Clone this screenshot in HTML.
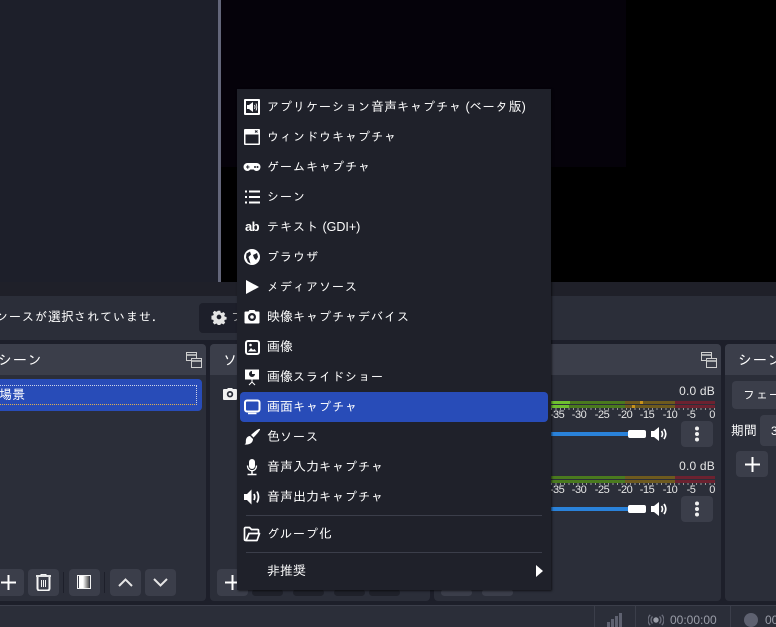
<!DOCTYPE html>
<html lang="ja"><head><meta charset="utf-8"><style>
html,body{margin:0;padding:0;width:776px;height:627px;overflow:hidden;background:#1d1f2a}
body{position:relative;font:12px "Liberation Sans","IPAGothic","Noto Sans CJK JP",sans-serif;color:#fff}
.a{position:absolute}
.t{position:absolute;white-space:nowrap;line-height:16px;height:16px}
.p{position:absolute;background:#2b2e39;border-radius:4px;top:344px;height:257px;overflow:hidden}
.h{position:absolute;left:0;right:0;top:0;height:31px;background:#3b3e4a}
.b{position:absolute;background:#3b3e4a;border-radius:4px}
.m{position:absolute;left:237px;top:89px;width:314px;height:501px;background:#1f212a;box-shadow:1px 1px 2px rgba(0,0,0,.6)}
.i{position:absolute;left:30px;font-size:12px;letter-spacing:1px;white-space:nowrap;line-height:16px}
.k{font-size:13px;letter-spacing:0}
.l{font-size:12.5px;letter-spacing:0}
.m svg{position:absolute;left:6px;width:18px;height:18px}
.tl{position:absolute;font-size:11px;color:#e6e6e6;line-height:10px;transform:translateX(-50%);letter-spacing:-.5px}
</style></head><body>
<div class="a" style="left:218px;top:0;width:3px;height:282px;background:#63667a"></div>
<div class="a" style="left:221px;top:0;width:555px;height:282px;background:#000"></div>
<div class="a" style="left:221px;top:0;width:405px;height:167px;background:#05020a"></div>
<div class="a" style="left:0;top:282px;width:776px;height:14px;background:#1f2029"></div>
<div class="a" style="left:0;top:296px;width:776px;height:44px;background:#2b2e39"></div>
<div class="t" style="left:-4px;top:309px;letter-spacing:1px">ンースが<span class="k">選択</span>されていませ．</div>
<div class="a" style="left:199px;top:303px;width:60px;height:30px;background:#1d1f2a;border-radius:4px"></div>
<svg class="a" style="left:211px;top:309px" width="16" height="16" viewBox="0 0 16 16"><path fill="#e4e4e4" fill-rule="evenodd" d="M6.600 1h2.800l.4 2 1.300.6 1.800-1.100 2 2-1.100 1.800.6 1.300 2 .4v2.800l-2 .4-.6 1.300 1.100 1.800-2 2-1.800-1.100-1.300.6-.4 2H6.600l-.4-2-1.300-.6-1.800 1.100-2-2 1.100-1.800-.6-1.300-2-.4V6.600l2-.4.6-1.300-1.100-1.800 2-2 1.800 1.100 1.300-.6zM8 5.400a2.600 2.600 0 1 0 0 5.200 2.600 2.600 0 0 0 0-5.200z" transform="translate(.8 .8) scale(.9)"/></svg>
<div class="t" style="left:231px;top:309px;color:#aaa">フ</div>

<div class="p" style="left:-6px;width:212px">
 <div class="h"></div>
 <div class="a" style="left:0;top:35px;width:208px;height:32px;background:#284cb8;border-radius:4px"></div>
 <div class="a" style="left:0;top:41px;width:201px;height:18px;border:1px dotted #e0b050;border-top-color:#cfd4e8;border-right-color:#cfd4e8"></div>
</div>
<div class="t" style="left:-2px;top:352px;font-size:14px;letter-spacing:.8px">シーン</div>
<div class="t" style="left:-1px;top:387px;font-size:13px">場景</div>
<svg class="a" style="left:186px;top:352px" width="16" height="16" viewBox="0 0 16 16" fill="none" stroke="#d0d0d0"><path d="M.5.500h10v8h-10z"/><path d="M.5 3h10" stroke-width="1.500"/><path d="M5.500 6.500h10v9h-10z" fill="#3b3e4a"/><path d="M5.500 9h10" stroke-width="1.500"/></svg>
<div class="b" style="left:-7px;top:569px;width:31px;height:27px"></div>
<svg class="a" style="left:1px;top:575px" width="16" height="15" viewBox="0 0 16 15"><path d="M0 7.500h15M7.500 0v15" stroke="#fff" stroke-width="2"/></svg>
<div class="b" style="left:28px;top:569px;width:31px;height:27px"></div>
<svg class="a" style="left:36px;top:574px" width="15" height="17" viewBox="0 0 15 17" fill="none" stroke="#f4f4f4"><path d="M0 2h15" stroke-width="1.800"/><path d="M5 1.500V.5h5v1" /><path d="M1.500 3v11.500a2 2 0 0 0 2 2h8a2 2 0 0 0 2-2V3" stroke-width="2"/><path d="M5.500 6v7M7.500 6v7M9.500 6v7"/></svg>
<div class="a" style="left:63px;top:572px;width:1px;height:21px;background:#1d1f2a"></div>
<div class="b" style="left:69px;top:569px;width:31px;height:27px"></div>
<svg class="a" style="left:77px;top:575px" width="14" height="14" viewBox="0 0 14 14"><defs><linearGradient id="g"><stop offset=".4" stop-color="#fff"/><stop offset="1" stop-color="#555"/></linearGradient></defs><rect x="2" y="1" width="10" height="12" fill="url(#g)"/><rect x=".5" y=".5" width="13" height="13" fill="none" stroke="#f2f2f2"/></svg>
<div class="a" style="left:104px;top:572px;width:1px;height:21px;background:#1d1f2a"></div>
<div class="b" style="left:110px;top:569px;width:31px;height:27px"></div>
<svg class="a" style="left:118px;top:578px" width="15" height="9" viewBox="0 0 15 9"><path d="M1 8l6.500-6.500L14 8" fill="none" stroke="#e6e6e6" stroke-width="2"/></svg>
<div class="b" style="left:145px;top:569px;width:31px;height:27px"></div>
<svg class="a" style="left:153px;top:578px" width="15" height="9" viewBox="0 0 15 9"><path d="M1 1l6.500 6.500L14 1" fill="none" stroke="#e6e6e6" stroke-width="2"/></svg>

<div class="p" style="left:210px;width:220px"><div class="h"></div></div>
<div class="t" style="left:223px;top:352px;font-size:14px">ソ</div>
<svg class="a" style="left:223px;top:388px" width="14" height="12" viewBox="0 0 14 12"><path fill="#f2f2f2" fill-rule="evenodd" d="M4 1l1-1h4l1 1h3a1 1 0 0 1 1 1v9a1 1 0 0 1-1 1H1a1 1 0 0 1-1-1V2a1 1 0 0 1 1-1zM7 3a3.200 3.200 0 1 0 0 6.400A3.200 3.200 0 0 0 7 3zm0 1.700a1.500 1.500 0 1 1 0 3 1.500 1.500 0 0 1 0-3z"/></svg>
<div class="b" style="left:217px;top:569px;width:31px;height:27px"></div>
<svg class="a" style="left:225px;top:575px" width="15" height="15" viewBox="0 0 15 15"><path d="M0 7.500h15M7.500 0v15" stroke="#fff" stroke-width="2"/></svg>
<div class="b" style="left:252px;top:589px;width:31px;height:7px;background:#1f212a"></div>
<div class="b" style="left:293px;top:589px;width:31px;height:7px;background:#1f212a"></div>
<div class="b" style="left:334px;top:589px;width:31px;height:7px;background:#1f212a"></div>
<div class="b" style="left:369px;top:589px;width:31px;height:7px;background:#1f212a"></div>

<div class="p" style="left:434px;width:287px"><div class="h"></div></div>
<svg class="a" style="left:701px;top:352px" width="16" height="16" viewBox="0 0 16 16" fill="none" stroke="#d0d0d0"><path d="M.5.500h10v8h-10z"/><path d="M.5 3h10" stroke-width="1.500"/><path d="M5.500 6.500h10v9h-10z" fill="#3b3e4a"/><path d="M5.500 9h10" stroke-width="1.500"/></svg>
<div class="b" style="left:441px;top:589px;width:31px;height:7px"></div>
<div class="b" style="left:482px;top:589px;width:31px;height:7px"></div>

<!-- meter 1 -->
<div class="t" style="right:61px;top:383px;color:#e6e6e6;letter-spacing:.2px">0.0 dB</div>
<div class="a" style="left:551px;top:401px;width:74px;height:7px;background:#4a7a1e"></div>
<div class="a" style="left:625px;top:401px;width:50px;height:7px;background:#6e5a1e"></div>
<div class="a" style="left:675px;top:401px;width:40px;height:7px;background:#6c2230"></div>
<div class="a" style="left:551px;top:404px;width:164px;height:1px;background:#2b2e39"></div>
<div class="a" style="left:551px;top:401px;width:19px;height:3px;background:#6fbf30"></div>
<div class="a" style="left:551px;top:405px;width:18px;height:3px;background:#6fbf30"></div>
<div class="a" style="left:640px;top:401px;width:3px;height:3px;background:#c8921a"></div>
<div class="a" style="left:632px;top:405px;width:3px;height:3px;background:#c8921a"></div>
<div class="a" style="left:551px;top:408px;width:164px;height:2px;background:repeating-linear-gradient(90deg,#9a9a9a 0 1px,transparent 1px 4.400px)"></div>
<div class="tl" style="left:557px;top:410px">-35</div><div class="tl" style="left:579px;top:410px">-30</div><div class="tl" style="left:602px;top:410px">-25</div><div class="tl" style="left:625px;top:410px">-20</div><div class="tl" style="left:647px;top:410px">-15</div><div class="tl" style="left:670px;top:410px">-10</div><div class="tl" style="left:691px;top:410px">-5</div><div class="tl" style="left:712px;top:410px">0</div>
<div class="a" style="left:551px;top:432px;width:78px;height:4px;background:#2a82da"></div>
<div class="a" style="left:628px;top:430px;width:18px;height:8px;background:#fff;border-radius:2px"></div>
<svg class="a" style="left:651px;top:426px" width="18" height="16" viewBox="0 0 18 16"><path fill="#fff" d="M0 5h3l5-4v14l-5-4H0z"/><path d="M10.500 5q2 3 0 6M13 3q3.500 5 0 10" fill="none" stroke="#fff" stroke-width="1.700"/></svg>
<div class="b" style="left:681px;top:421px;width:32px;height:26px"></div>
<svg class="a" style="left:693px;top:425px" width="8" height="18" viewBox="0 0 8 18" fill="#f0f0f0"><circle cx="4" cy="3.500" r="2"/><circle cx="4" cy="9" r="2"/><circle cx="4" cy="14.500" r="2"/></svg>
<!-- meter 2 -->
<div class="t" style="right:61px;top:458px;color:#e6e6e6;letter-spacing:.2px">0.0 dB</div>
<div class="a" style="left:551px;top:476px;width:74px;height:7px;background:#4a7a1e"></div>
<div class="a" style="left:625px;top:476px;width:50px;height:7px;background:#6e5a1e"></div>
<div class="a" style="left:675px;top:476px;width:40px;height:7px;background:#6c2230"></div>
<div class="a" style="left:551px;top:479px;width:164px;height:1px;background:#2b2e39"></div>
<div class="a" style="left:551px;top:483px;width:164px;height:2px;background:repeating-linear-gradient(90deg,#9a9a9a 0 1px,transparent 1px 4.400px)"></div>
<div class="tl" style="left:557px;top:485px">-35</div><div class="tl" style="left:579px;top:485px">-30</div><div class="tl" style="left:602px;top:485px">-25</div><div class="tl" style="left:625px;top:485px">-20</div><div class="tl" style="left:647px;top:485px">-15</div><div class="tl" style="left:670px;top:485px">-10</div><div class="tl" style="left:691px;top:485px">-5</div><div class="tl" style="left:712px;top:485px">0</div>
<div class="a" style="left:551px;top:507px;width:78px;height:4px;background:#2a82da"></div>
<div class="a" style="left:628px;top:505px;width:18px;height:8px;background:#fff;border-radius:2px"></div>
<svg class="a" style="left:651px;top:501px" width="18" height="16" viewBox="0 0 18 16"><path fill="#fff" d="M0 5h3l5-4v14l-5-4H0z"/><path d="M10.500 5q2 3 0 6M13 3q3.500 5 0 10" fill="none" stroke="#fff" stroke-width="1.700"/></svg>
<div class="b" style="left:681px;top:496px;width:32px;height:26px"></div>
<svg class="a" style="left:693px;top:500px" width="8" height="18" viewBox="0 0 8 18" fill="#f0f0f0"><circle cx="4" cy="3.500" r="2"/><circle cx="4" cy="9" r="2"/><circle cx="4" cy="14.500" r="2"/></svg>

<div class="p" style="left:725px;width:60px"><div class="h"></div></div>
<div class="t" style="left:738px;top:352px;font-size:14px;letter-spacing:.8px">シーン</div>
<div class="b" style="left:732px;top:381px;width:50px;height:28px"></div>
<div class="t" style="left:743px;top:387px;letter-spacing:1px">フェー</div>
<div class="t" style="left:731px;top:423px;font-size:13px">期間</div>
<div class="b" style="left:760px;top:415px;width:30px;height:31px"></div>
<div class="t" style="left:771px;top:423px">3</div>
<div class="b" style="left:736px;top:451px;width:32px;height:26px"></div>
<svg class="a" style="left:745px;top:457px" width="15" height="15" viewBox="0 0 15 15"><path d="M0 7.500h15M7.500 0v15" stroke="#fff" stroke-width="2"/></svg>

<!-- status bar -->
<div class="a" style="left:0;top:605px;width:776px;height:22px;background:#2b2e39;border-top:1px solid #3b3e4a;box-sizing:border-box"></div>
<div class="a" style="left:594px;top:605px;width:1px;height:22px;background:#3b3e4a"></div>
<div class="a" style="left:635px;top:605px;width:1px;height:22px;background:#3b3e4a"></div>
<div class="a" style="left:730px;top:605px;width:1px;height:22px;background:#3b3e4a"></div>
<svg class="a" style="left:607px;top:612px" width="16" height="15" viewBox="0 0 16 15" fill="#5e6170"><rect x="0" y="10" width="3" height="5"/><rect x="4" y="7" width="3" height="8"/><rect x="8" y="4" width="3" height="11"/><rect x="12" y="1" width="3" height="14"/></svg>
<svg class="a" style="left:648px;top:612px" width="16" height="16" viewBox="0 0 16 16" fill="none" stroke="#6c6f7c" stroke-width="1.300"><circle cx="8" cy="8" r="2.700" fill="#9a9da8" stroke="none"/><path d="M4.500 4.500a5 5 0 0 0 0 7M11.500 4.500a5 5 0 0 1 0 7M2.200 2.800a7.500 7.500 0 0 0 0 10.400M13.800 2.800a7.500 7.500 0 0 1 0 10.400"/></svg>
<div class="t" style="left:670px;top:612px;color:#9a9da8">00:00:00</div>
<div class="a" style="left:744px;top:613px;width:14px;height:14px;border-radius:50%;background:#5e6170"></div>
<div class="t" style="left:765px;top:612px;color:#9a9da8">00:00:00</div>

<!-- menu -->
<div class="m">
 <div class="a" style="left:3px;top:303px;width:308px;height:30px;background:#284cb8;border-radius:4px"></div>
 <svg style="top:9px" viewBox="0 0 18 18"><path fill="#fff" fill-rule="evenodd" d="M2 1h14a1 1 0 0 1 1 1v14a1 1 0 0 1-1 1H2a1 1 0 0 1-1-1V2a1 1 0 0 1 1-1zm1 2v12h12V3z"/><path fill="#fff" d="M4 7h2l4-3v10l-4-3H4z"/><path d="M11.500 7q1 2 0 4M13 5.500q1.600 3.500 0 7" fill="none" stroke="#fff" stroke-width=".9"/></svg>
 <div class="i" style="top:10px">アプリケーション<span class="k">音声</span>キャプチャ<span class="l"> (</span>ベータ<span class="k">版</span><span class="l">)</span></div>
 <svg style="top:39px" viewBox="0 0 18 18"><path fill="#fff" fill-rule="evenodd" d="M2 1h14a1 1 0 0 1 1 1v14a1 1 0 0 1-1 1H2a1 1 0 0 1-1-1V2a1 1 0 0 1 1-1zm.500 5.500v9h13v-9z"/><path d="M12 2.500l2.500 2M14.500 2.500l-2.500 2" stroke="#1f212a"/></svg>
 <div class="i" style="top:40px">ウィンドウキャプチャ</div>
 <svg style="top:69px" viewBox="0 0 18 18"><path fill="#fff" fill-rule="evenodd" d="M4.500 5h9a4 4 0 0 1 0 8c-1.500 0-2-.8-2.800-1.500H7.300C6.500 12.200 6 13 4.500 13a4 4 0 0 1 0-8z"/><path d="M3 9h3.500M4.750 7.200v3.600" stroke="#1f212a"/><circle cx="12" cy="9" r="1" fill="#1f212a"/><circle cx="14.500" cy="9" r="1" fill="#1f212a"/></svg>
 <div class="i" style="top:70px">ゲームキャプチャ</div>
 <svg style="top:99px" viewBox="0 0 18 18"><path d="M6 3.500h11M6 9h11M6 14.500h11" stroke="#fff" stroke-width="2"/><path d="M2 3.500h2M2 9h2M2 14.500h2" stroke="#fff" stroke-width="2"/></svg>
 <div class="i" style="top:100px">シーン</div>
 <div class="a" style="left:8px;top:130px;font:bold 13px/16px 'Liberation Sans',sans-serif;letter-spacing:-.6px">ab</div>
 <div class="i" style="top:130px">テキスト<span class="l"> (GDI+)</span></div>
 <svg style="top:159px" viewBox="0 0 18 18"><circle cx="9" cy="9" r="8" fill="#fff"/><path fill="#1f212a" d="M3.500 5.500L7 3.500l1 3-2.500 2.500 1 3 1 3.500L5 14 3 9.500zM10 7l4-2 1 4-2 3-2-2z"/></svg>
 <div class="i" style="top:160px">ブラウザ</div>
 <svg style="top:189px" viewBox="0 0 18 18"><path fill="#fff" d="M3 2l13 7-13 7z"/></svg>
 <div class="i" style="top:190px">メディアソース</div>
 <svg style="top:219px" viewBox="0 0 18 18"><path fill="#fff" fill-rule="evenodd" d="M5.500 3.500l1-1.500h5l1 1.500h3a1 1 0 0 1 1 1v10a1 1 0 0 1-1 1h-13a1 1 0 0 1-1-1v-10a1 1 0 0 1 1-1zM9 5a4 4 0 1 0 0 8 4 4 0 0 0 0-8zm0 2.200a1.800 1.800 0 1 1 0 3.600 1.800 1.800 0 0 1 0-3.600z"/></svg>
 <div class="i" style="top:220px"><span class="k">映像</span>キャプチャデバイス</div>
 <svg style="top:249px" viewBox="0 0 18 18"><rect x="3" y="3" width="13" height="13" rx="2" fill="none" stroke="#fff" stroke-width="2"/><path fill="#fff" d="M5 13.500l3-3.500 2 2 1.500-1 2 2.500z"/><circle cx="7.500" cy="7" r="1.300" fill="#fff"/></svg>
 <div class="i" style="top:250px"><span class="k">画像</span></div>
 <svg style="top:279px" viewBox="0 0 18 18"><path fill="#fff" d="M2 1.500h14v10H2z"/><path fill="#1f212a" d="M9 3a3 3 0 1 0 3 3H9z"/><path stroke="#fff" d="M9 11v3M9 14l-3 3M9 14l3 3"/></svg>
 <div class="i" style="top:280px"><span class="k">画像</span>スライドショー</div>
 <svg style="top:309px" viewBox="0 0 18 18"><rect x="2" y="2.500" width="14.500" height="11" rx="2" fill="none" stroke="#fff" stroke-width="2"/><path d="M5 15.500h8.500" stroke="#fff" stroke-width="1.500"/></svg>
 <div class="i" style="top:310px"><span class="k">画面</span>キャプチャ</div>
 <svg style="top:339px" viewBox="0 0 18 18"><path fill="#fff" d="M17 1c.5 1-3 5-6.500 8.500L8 7c3-3 8-7 9-6zM7 8l3 3c0 3.500-3 6-8.500 5.500 2-1 1-3 1.500-5C3.500 9.500 5 8 7 8z"/></svg>
 <div class="i" style="top:340px"><span class="k">色</span>ソース</div>
 <svg style="top:369px" viewBox="0 0 18 18"><rect x="6" y="1" width="6" height="10" rx="3" fill="#fff"/><path d="M4.500 7.500c0 7 9 7 9 0" fill="none" stroke="#fff" stroke-width="1.300"/><path d="M9 12.500V16M4.500 16.500h9" stroke="#fff" stroke-width="1.500"/></svg>
 <div class="i" style="top:370px"><span class="k">音声入力</span>キャプチャ</div>
 <svg style="top:399px" viewBox="0 0 18 18"><path fill="#fff" d="M1 6h3l4.500-4.500v15L4 12H1z"/><path d="M11 6q1.500 3 0 6M14 3.500q3 5.500 0 11" fill="none" stroke="#fff" stroke-width="1.800"/></svg>
 <div class="i" style="top:400px"><span class="k">音声出力</span>キャプチャ</div>
 <div class="a" style="left:9px;top:426px;width:296px;height:1px;background:#3b3e4a"></div>
 <svg style="top:436px" viewBox="0 0 18 18"><path d="M2.500 15.500a1 1 0 0 1-1-1v-11a1 1 0 0 1 1-1h4l2 2h6a1 1 0 0 1 1 1V8M3 15.500h11l2.500-7H6L3 15.500z" fill="none" stroke="#fff" stroke-width="1.700" stroke-linejoin="round"/></svg>
 <div class="i" style="top:437px">グループ<span class="k">化</span></div>
 <div class="a" style="left:9px;top:463px;width:296px;height:1px;background:#3b3e4a"></div>
 <div class="i" style="top:474px"><span class="k">非推奨</span></div>
 <svg style="left:299px;top:476px;width:7px;height:12px" viewBox="0 0 7 12"><path fill="#fff" d="M0 0l7 6-7 6z"/></svg>
</div>
</body></html>
